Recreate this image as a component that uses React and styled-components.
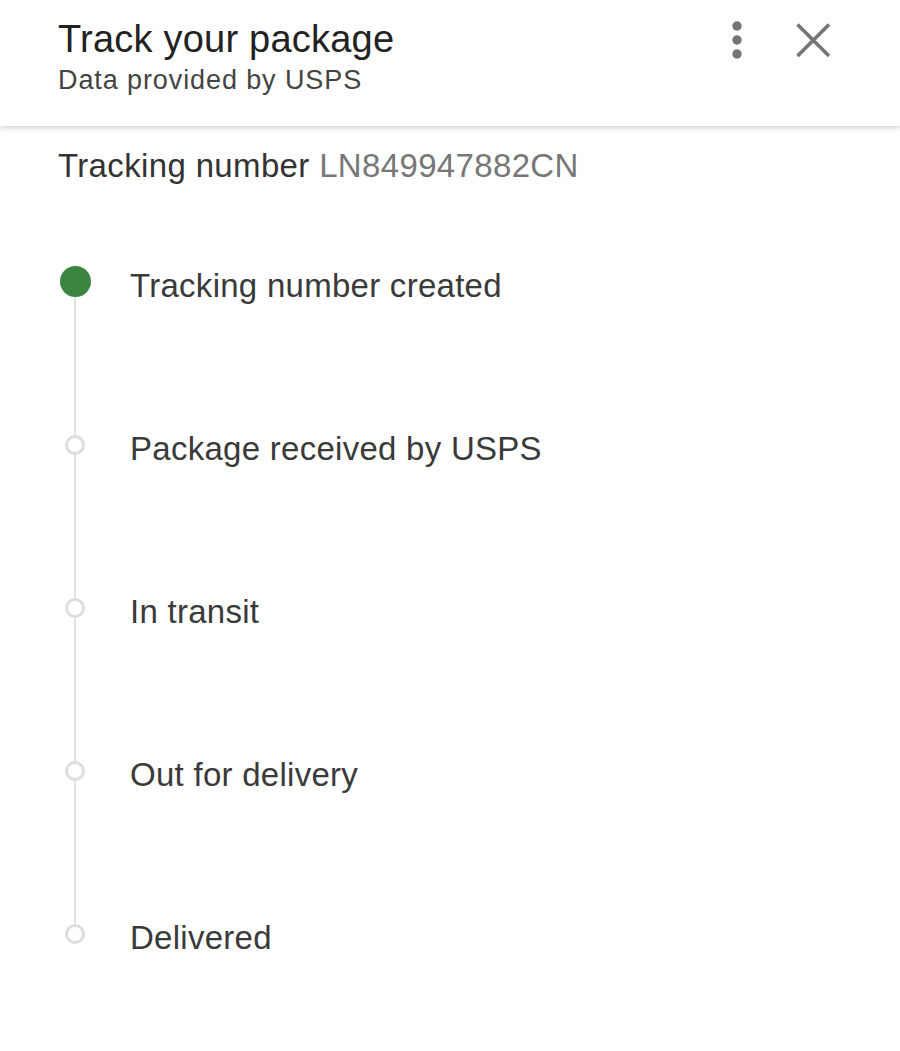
import React from 'react';
import styled, { createGlobalStyle } from 'styled-components';

const STEPS = [
  { label: "Tracking number created", done: true },
  { label: "Package received by USPS", done: false },
  { label: "In transit", done: false },
  { label: "Out for delivery", done: false },
  { label: "Delivered", done: false },
];

const GlobalStyle = createGlobalStyle`
  html, body {
    margin: 0;
    background: #fff;
    font-family: 'Liberation Sans', Arial, Helvetica, sans-serif;
  }
`;

function App() {
  return (
    <Root>
      <GlobalStyle />
      <Header>
        <Titles>
          <Title>Track your package</Title>
          <Subtitle>Data provided by USPS</Subtitle>
        </Titles>
        <Actions>
          <IconButton aria-label="More options">
            <svg width="20" height="44" viewBox="0 0 20 44">
              <circle cx="10" cy="8" r="4.7" fill="#757575" />
              <circle cx="10" cy="22" r="4.7" fill="#757575" />
              <circle cx="10" cy="36" r="4.7" fill="#757575" />
            </svg>
          </IconButton>
          <IconButton aria-label="Close">
            <svg width="40" height="40" viewBox="0 0 40 40">
              <path d="M4.5 4.5 L36 36 M36 4.5 L4.5 36" stroke="#757575" strokeWidth="3.6" fill="none" />
            </svg>
          </IconButton>
        </Actions>
      </Header>
      <Content>
        <TrackingLine>
          Tracking number <TrackingId>LN849947882CN</TrackingId>
        </TrackingLine>
        <Timeline>
          {STEPS.map((step, i) => (
            <Step key={step.label} last={i === STEPS.length - 1}>
              <MarkerCol>
                <Marker done={step.done} />
              </MarkerCol>
              <StepLabel>{step.label}</StepLabel>
            </Step>
          ))}
        </Timeline>
      </Content>
    </Root>
  );
}

const Root = styled.div`
  min-height: 1051px;
  background: #fff;
`;
const Header = styled.header`
  height: 126px;
  box-sizing: border-box;
  display: flex;
  justify-content: space-between;
  align-items: flex-start;
  padding: 20px 67px 0 58px;
  background: #fff;
  box-shadow: 0 2px 5px rgba(0, 0, 0, 0.18);
  position: relative;
  z-index: 1;
`;
const Titles = styled.div`
  display: flex;
  flex-direction: column;
  gap: 9px;
`;
const Title = styled.h1`
  margin: 0;
  font-size: 38px;
  line-height: 1;
  font-weight: 400;
  letter-spacing: 0.22px;
  color: #222;
`;
const Subtitle = styled.div`
  font-size: 27px;
  line-height: 1;
  letter-spacing: 0.9px;
  color: #444;
`;
const Actions = styled.div`
  display: flex;
  align-items: flex-start;
  gap: 46px;
`;
const IconButton = styled.button`
  border: none;
  background: none;
  padding: 0;
  margin: 0;
  display: flex;
  cursor: pointer;
  &:first-child {
    margin-top: -2px;
  }
`;
const Content = styled.main`
  padding: 23px 0 0 58px;
`;
const TrackingLine = styled.div`
  font-size: 33px;
  line-height: 1;
  letter-spacing: 0.35px;
  color: #333;
`;
const TrackingId = styled.span`
  color: #777;
`;
const Timeline = styled.ol`
  list-style: none;
  margin: 18px 0 0;
  padding: 0;
`;
const Step = styled.li`
  position: relative;
  height: 163px;
  display: flex;
  align-items: center;
  gap: 38px;
  &::after {
    content: ${props => props.last ? 'none' : "''"};
    position: absolute;
    left: 16px;
    top: 81px;
    width: 2px;
    height: 163px;
    background: #e3e3e3;
  }
`;
const MarkerCol = styled.div`
  width: 34px;
  display: flex;
  justify-content: center;
  position: relative;
  z-index: 1;
`;
const Marker = styled.span`
  display: block;
  box-sizing: border-box;
  width: ${props => props.done ? "31px" : "20px"};
  height: ${props => props.done ? "31px" : "20px"};
  border-radius: 50%;
  background: ${props => props.done ? "#3b8541" : "#fff"};
  border: ${props => props.done ? "none" : "3px solid #dedede"};
`;
const StepLabel = styled.span`
  font-size: 33px;
  line-height: 1;
  letter-spacing: 0.27px;
  color: #3a3a3a;
  padding-top: 8px;
`;

export default App;
